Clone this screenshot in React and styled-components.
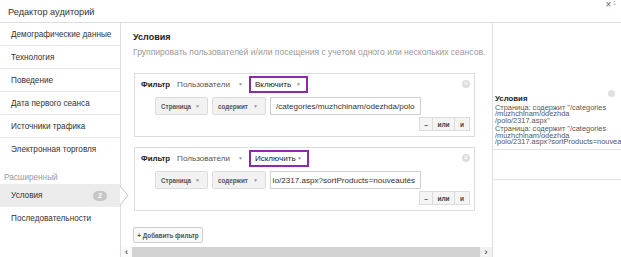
import React from 'react';
import styled, { createGlobalStyle } from 'styled-components';

const Global = createGlobalStyle`
  html, body, #root { margin: 0; padding: 0; height: 100%; }
  body {
    font-family: "Liberation Sans", Arial, sans-serif;
    background: #fff;
    color: #333;
    overflow: hidden;
  }
  * { box-sizing: border-box; }
`;

const Page = styled.div`
  display: flex;
  flex-direction: column;
  width: 621px;
  height: 257px;
`;

const Header = styled.header`
  height: 23px;
  flex: none;
  display: flex;
  align-items: flex-start;
  border-bottom: 1px solid #dcdcdc;
  padding-left: 8px;
`;

const Title = styled.h1`
  margin: 6px 0 0;
  font-size: 9.2px;
  line-height: 12px;
  font-weight: normal;
  color: #333;
`;

const Close = styled.div`
  margin-left: auto;
  margin-right: 5px;
  font-size: 10px;
  line-height: 10px;
  color: #666;
  display: flex;
  align-items: flex-start;
  sup { font-size: 5px; color: #aaa; margin-left: 2px; line-height: 6px; }
`;

const Body = styled.div`
  flex: 1;
  min-height: 0;
  display: flex;
`;

const Sidebar = styled.nav`
  width: 121px;
  flex: none;
  border-right: 1px solid #dcdcdc;
  display: flex;
  flex-direction: column;
  position: relative;
  z-index: 2;
`;

const NavItem = styled.div`
  height: 23px;
  flex: none;
  display: flex;
  align-items: center;
  padding-left: 11px;
  font-size: 8.2px;
  white-space: nowrap;
  color: #333;
  border-bottom: ${(p) => (p.$last ? 'none' : '1px solid #e6e6e6')};
  background: ${(p) => (p.$active ? '#ebebeb' : 'transparent')};
  position: relative;
`;

const SectionLabel = styled.div`
  height: 23px;
  flex: none;
  padding: 11px 0 0 4px;
  font-size: 8.2px;
  line-height: 12px;
  color: #9a9a9a;
`;

const Badge = styled.span`
  margin-left: auto;
  margin-right: 13px;
  width: 14px;
  height: 10px;
  border-radius: 5px;
  background: #c6c6c6;
  color: #fff;
  font-size: 7px;
  font-weight: bold;
  display: flex;
  align-items: center;
  justify-content: center;
`;

const Pointer = styled.svg`
  position: absolute;
  left: 120px;
  top: 2px;
  overflow: visible;
`;

const Main = styled.main`
  flex: 1;
  min-width: 0;
  display: flex;
  flex-direction: column;
`;

const Content = styled.div`
  flex: 1;
  min-height: 0;
  padding: 8px 0 0 12px;
  overflow: hidden;
`;

const Heading = styled.h2`
  margin: 0;
  font-size: 9px;
  line-height: 12px;
  font-weight: bold;
  color: #222;
`;

const Subtitle = styled.p`
  margin: 3px 0 0;
  font-size: 8.55px;
  line-height: 12px;
  color: #999;
  white-space: nowrap;
`;

const FilterBox = styled.div`
  margin-top: ${(p) => p.$gap}px;
  margin-left: 1px;
  width: 341px;
  height: 64px;
  border: 1px solid #dcdcdc;
  padding: 1px 4px 0 6px;
  display: flex;
  flex-direction: column;
`;

const TopRow = styled.div`
  height: 18px;
  display: flex;
  align-items: center;
`;

const FilterLabel = styled.span`
  font-size: 7.8px;
  font-weight: bold;
  color: #222;
  margin-right: 7px;
`;

const Scope = styled.span`
  font-size: 8.1px;
  color: #555;
`;

const Caret = styled.span`
  font-size: 5px;
  color: #999;
  margin-left: 8px;
`;

const Highlight = styled.div`
  margin-left: 6px;
  width: ${(p) => p.$w}px;
  height: 17px;
  border: 2px solid #8d2aa8;
  display: flex;
  align-items: center;
  justify-content: space-between;
  padding: 0 5px 0 4px;
  font-size: 8.1px;
  color: #222;
`;

const InnerCaret = styled.span`
  font-size: 5px;
  color: #999;
`;

const RemoveDot = styled.span`
  margin-left: auto;
  width: 8px;
  height: 8px;
  border-radius: 50%;
  background: #dedede;
  color: #fff;
  font-size: 7px;
  line-height: 8px;
  text-align: center;
`;

const ConditionRow = styled.div`
  margin-top: 4px;
  padding-left: 14px;
  height: 18px;
  display: flex;
  gap: 4px;
`;

const Select = styled.div`
  width: ${(p) => p.$w}px;
  height: 18px;
  background: #f2f2f2;
  border: 1px solid #dcdcdc;
  border-radius: 2px;
  display: flex;
  align-items: center;
  justify-content: space-between;
  padding: 0 7px 0 5px;
  font-size: 6.3px;
  font-weight: bold;
  color: #555;
`;

const SmallCaret = styled.span`
  font-size: 5px;
  color: #999;
  font-weight: normal;
`;

const ValueInput = styled.div`
  width: 151px;
  height: 18px;
  border: 1px solid #cfcfcf;
  background: #fff;
  display: flex;
  align-items: center;
  justify-content: ${(p) => (p.$end ? 'flex-end' : 'flex-start')};
  padding: 0 5px;
  overflow: hidden;
  white-space: nowrap;
  font-size: 8.1px;
  color: #333;
`;

const ActionRow = styled.div`
  margin-top: 2px;
  display: flex;
  justify-content: flex-end;
`;

const ButtonGroup = styled.div`
  display: flex;
  height: 14px;
  border: 1px solid #dcdcdc;
  background: #f4f4f4;
`;

const GroupButton = styled.span`
  width: ${(p) => p.$w}px;
  display: flex;
  align-items: center;
  justify-content: center;
  font-size: 6.5px;
  font-weight: bold;
  color: #444;
  & + & { border-left: 1px solid #dcdcdc; }
`;

const AddButton = styled.button`
  margin-top: 16px;
  width: 70px;
  height: 16px;
  border: 1px solid #cfcfcf;
  border-radius: 2px;
  background: #f8f8f8;
  font-family: inherit;
  font-size: 6.3px;
  font-weight: bold;
  color: #555;
  padding: 0;
`;

const Scrollbar = styled.div`
  height: 10px;
  flex: none;
  display: flex;
  background: #f1f1f1;
`;

const ScrollArrow = styled.span`
  width: ${(p) => p.$w}px;
  display: flex;
  align-items: center;
  justify-content: center;
  font-size: 9px;
  font-weight: bold;
  color: #555;
  background: ${(p) => p.$bg};
`;

const Thumb = styled.div`
  flex: 1;
  background: #d2d2d2;
`;

const RightPanel = styled.aside`
  width: 129px;
  flex: none;
  border-left: 1px solid #dcdcdc;
  padding-top: 70px;
  overflow: hidden;
`;

const Summary = styled.section`
  padding: 0 6px 4px 2px;
  border-bottom: 1px solid #e3e3e3;
`;

const SummaryHead = styled.div`
  display: flex;
  align-items: center;
  height: 10px;
  font-size: 7.8px;
  font-weight: bold;
  color: #222;
`;

const SummaryDot = styled.span`
  margin-left: auto;
  width: 7px;
  height: 7px;
  border-radius: 50%;
  background: #e0e0e0;
  align-self: flex-start;
  margin-top: -3px;
`;

const SummaryText = styled.p`
  margin: 2px 0 0;
  font-size: 7.4px;
  line-height: 6.4px;
  color: #555;
  white-space: nowrap;
`;

const EmptySection = styled.section`
  height: 30px;
  border-bottom: 1px solid #e3e3e3;
`;

const navTop = [
  'Демографические данные',
  'Технология',
  'Поведение',
  'Дата первого сеанса',
  'Источники трафика',
];

function Filter({ gap, mode, modeWidth, value, end }) {
  return (
    <FilterBox $gap={gap}>
      <TopRow>
        <FilterLabel>Фильтр</FilterLabel>
        <Scope>Пользователи</Scope>
        <Caret>▼</Caret>
        <Highlight $w={modeWidth}>
          {mode}
          <InnerCaret>▼</InnerCaret>
        </Highlight>
        <RemoveDot>×</RemoveDot>
      </TopRow>
      <ConditionRow>
        <Select $w={53}>
          Страница <SmallCaret>▼</SmallCaret>
        </Select>
        <Select $w={54}>
          содержит <SmallCaret>▼</SmallCaret>
        </Select>
        <ValueInput $end={end}>{value}</ValueInput>
      </ConditionRow>
      <ActionRow>
        <ButtonGroup>
          <GroupButton $w={12}>–</GroupButton>
          <GroupButton $w={22}>или</GroupButton>
          <GroupButton $w={15}>и</GroupButton>
        </ButtonGroup>
      </ActionRow>
    </FilterBox>
  );
}

export default function App() {
  return (
    <>
      <Global />
      <Page>
        <Header>
          <Title>Редактор аудиторий</Title>
          <Close>
            ×<sup>1</sup>
          </Close>
        </Header>
        <Body>
          <Sidebar>
            {navTop.map((t) => (
              <NavItem key={t}>{t}</NavItem>
            ))}
            <NavItem $last>Электронная торговля</NavItem>
            <SectionLabel>Расширенный</SectionLabel>
            <NavItem $active $last>
              Условия
              <Badge>2</Badge>
              <Pointer width="9" height="19" viewBox="0 0 9 19">
                <polygon points="0,0 8,9.5 0,19" fill="#fff" />
                <polyline points="0,0 8,9.5 0,19" fill="none" stroke="#c4c4c4" strokeWidth="1" />
              </Pointer>
            </NavItem>
            <NavItem $last>Последовательности</NavItem>
          </Sidebar>
          <Main>
            <Content>
              <Heading>Условия</Heading>
              <Subtitle>
                Группировать пользователей и/или посещения с учетом одного или нескольких сеансов.
              </Subtitle>
              <Filter
                gap={15}
                mode="Включить"
                modeWidth={59}
                value="/categories/muzhchinam/odezhda/polo"
              />
              <Filter
                gap={10}
                mode="Исключить"
                modeWidth={60}
                value="lo/2317.aspx?sortProducts=nouveautés"
                end
              />
              <AddButton>+ Добавить фильтр</AddButton>
            </Content>
            <Scrollbar>
              <ScrollArrow $w={11} $bg="#fafafa">‹</ScrollArrow>
              <Thumb />
              <ScrollArrow $w={12} $bg="#f1f1f1">›</ScrollArrow>
            </Scrollbar>
          </Main>
          <RightPanel>
            <Summary>
              <SummaryHead>
                Условия
                <SummaryDot />
              </SummaryHead>
              <SummaryText>
                Страница: содержит "/categories
                <br />
                /muzhchinam/odezhda
                <br />
                /polo/2317.aspx"
              </SummaryText>
              <SummaryText>
                Страница: содержит "/categories
                <br />
                /muzhchinam/odezhda
                <br />
                /polo/2317.aspx?sortProducts=nouveautés"
              </SummaryText>
            </Summary>
            <EmptySection />
          </RightPanel>
        </Body>
      </Page>
    </>
  );
}
